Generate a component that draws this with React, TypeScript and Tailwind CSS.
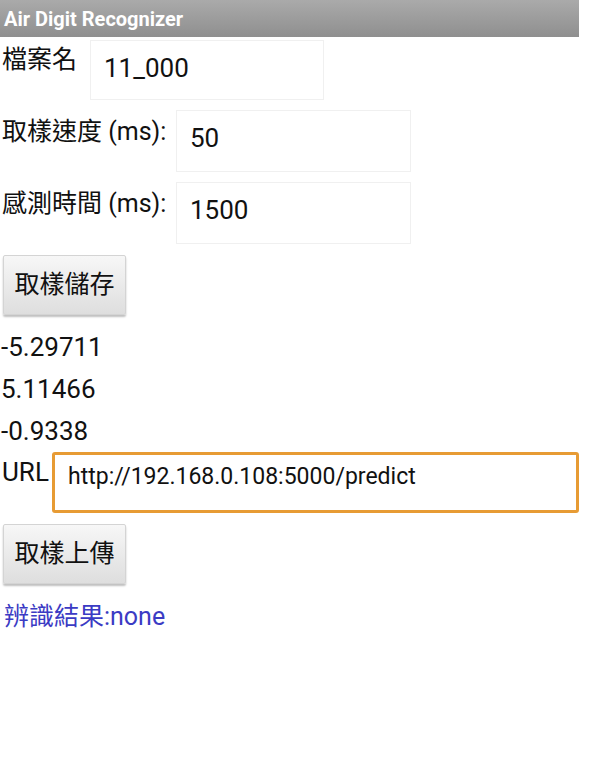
import React from 'react';

const font = { fontFamily: 'Roboto, "Noto Sans CJK TC", sans-serif' };

// plain text box, nearly borderless like the old Android theme
function Field({ value, className }: { value: string; className: string }) {
  return (
    <div className={`border border-[#f0f0f0] bg-white text-[26px] leading-[30px] text-[#111] pl-[13px] pt-[12px] ${className}`}>
      {value}
    </div>
  );
}

function OldButton({ label, className }: { label: string; className?: string }) {
  return (
    <div
      className={`flex h-[60px] w-[123px] items-center justify-center rounded-[2px] border border-[#d4d4d4] bg-gradient-to-b from-[#f7f7f7] to-[#dedede] text-[25px] text-[#111] shadow-[0_2px_2px_rgba(0,0,0,0.25)] ${className ?? ''}`}
    >
      {label}
    </div>
  );
}

export default function App() {
  return (
    <div className="h-[773px] w-[608px] bg-white" style={font}>
      <div className="flex h-[37px] w-[579px] items-center bg-gradient-to-b from-[#aaaaaa] to-[#8f8f8f] pl-[4px] text-[20px] font-bold text-white">
        Air Digit Recognizer
      </div>

      <div className="mt-[3px] flex">
        <div className="w-[90px] pl-[2px] pt-[2px] text-[25px] leading-[36px] text-[#111]">檔案名</div>
        <Field value="11_000" className="h-[60px] w-[234px]" />
      </div>

      <div className="mt-[10px] flex">
        <div className="w-[176px] pl-[2px] pt-[4px] text-[25px] leading-[36px] text-[#111]">取樣速度 (ms):</div>
        <Field value="50" className="h-[62px] w-[235px]" />
      </div>

      <div className="mt-[10px] flex">
        <div className="w-[176px] pl-[2px] pt-[4px] text-[25px] leading-[36px] text-[#111]">感測時間 (ms):</div>
        <Field value="1500" className="h-[62px] w-[235px]" />
      </div>

      <OldButton label="取樣儲存" className="ml-[3px] mt-[11px]" />

      <div className="mt-[11px] pl-[1px] text-[26px] leading-[42px] text-[#111]">
        <div>-5.29711</div>
        <div>5.11466</div>
        <div>-0.9338</div>
      </div>

      <div className="flex">
        <div className="w-[52px] pl-[2px] pt-[4px] text-[26px] leading-[32px] text-[#111]">URL</div>
        <div className="h-[61px] w-[527px] rounded-[3px] border-[3px] border-[#e79b34] bg-white pl-[13px] pt-[7px] text-[23px] leading-[30px] text-[#111]">
          http://192.168.0.108:5000/predict
        </div>
      </div>

      <OldButton label="取樣上傳" className="ml-[3px] mt-[11px]" />

      <div className="mt-[17px] pl-[4px] text-[25px] leading-[32px] text-[#3b3bc4]">辨識結果:none</div>
    </div>
  );
}
